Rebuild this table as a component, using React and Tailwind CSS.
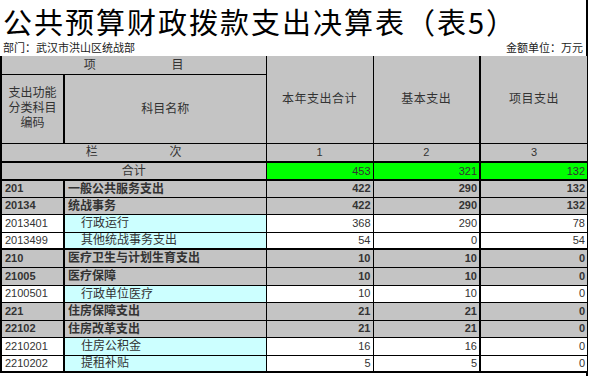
import React from 'react'

const ROWS = [
  { code: '201', name: '一般公共服务支出', a: 422, b: 290, c: 132, level: 1, h: 17 },
  { code: '20134', name: '统战事务', a: 422, b: 290, c: 132, level: 2, h: 17 },
  { code: '2013401', name: '行政运行', a: 368, b: 290, c: 78, level: 3, h: 18 },
  { code: '2013499', name: '其他统战事务支出', a: 54, b: 0, c: 54, level: 3, h: 17 },
  { code: '210', name: '医疗卫生与计划生育支出', a: 10, b: 10, c: 0, level: 1, h: 18, thick: true },
  { code: '21005', name: '医疗保障', a: 10, b: 10, c: 0, level: 2, h: 18 },
  { code: '2100501', name: '行政单位医疗', a: 10, b: 10, c: 0, level: 3, h: 17 },
  { code: '221', name: '住房保障支出', a: 21, b: 21, c: 0, level: 1, h: 18 },
  { code: '22102', name: '住房改革支出', a: 21, b: 21, c: 0, level: 2, h: 17 },
  { code: '2210201', name: '住房公积金', a: 16, b: 16, c: 0, level: 3, h: 18 },
  { code: '2210202', name: '提租补贴', a: 5, b: 5, c: 0, level: 3, h: 17 },
]

const gray = 'bg-[#c4c4c4]'

function DataRow({ row }) {
  const sub = row.level === 3
  const bg = sub ? 'bg-white' : gray
  const top = row.thick ? 'border-t-2' : 'border-t'
  const weight = sub ? 'font-normal' : 'font-bold'
  return (
    <tr style={{ height: row.h }}>
      <td className={`${bg} ${top} border-l-2 border-r-2 border-black px-[3px] text-[11px] ${weight} leading-none`}>
        {row.code}
      </td>
      <td
        className={`${sub ? 'bg-[#ccffff] pl-[16px]' : `${gray} pl-[3px]`} ${top} border-r border-black text-[12px] ${weight} leading-none`}
      >
        {row.name}
      </td>
      <td className={`${bg} ${top} border-r border-black text-right pr-[2px] text-[11px] ${weight} leading-none`}>{row.a}</td>
      <td className={`${bg} ${top} border-r-2 border-black text-right pr-[2px] text-[11px] ${weight} leading-none`}>{row.b}</td>
      <td className={`${bg} ${top} border-black text-right pr-[2px] text-[11px] ${weight} leading-none`}>{row.c}</td>
    </tr>
  )
}

export default function App() {
  return (
    <div className="w-[589px] h-[376px] bg-white overflow-hidden font-['Liberation_Sans','Noto_Sans_CJK_SC',sans-serif] text-black">
      <div className="w-[588px] h-full border-r-2 border-black">
        <div className="h-[42px] pl-[3px] text-[29px] leading-[42px] tracking-[2px] font-['Noto_Sans_CJK_SC',sans-serif]">
          公共预算财政拨款支出决算表（表5）
        </div>
        <div className="h-[14px] flex justify-between items-start px-[3px] text-[11px] leading-[13px] text-[#222]">
          <span>部门：武汉市洪山区统战部</span>
          <span>金额单位：万元</span>
        </div>
        <table className="table-fixed border-collapse w-[586px] text-[#333]">
          <colgroup>
            <col className="w-[63px]" />
            <col className="w-[202px]" />
            <col className="w-[107px]" />
            <col className="w-[107px]" />
            <col className="w-[107px]" />
          </colgroup>
          <tbody>
            <tr className="h-[18px]">
              <td colSpan={2} className={`${gray} border-l-2 border-r border-b border-black text-[12px] leading-none`}>
                <div className="flex justify-around px-[44px]">
                  <span>项</span>
                  <span>目</span>
                </div>
              </td>
              <td rowSpan={2} className={`${gray} border-r border-black text-center text-[12px] tracking-[0.5px]`}>本年支出合计</td>
              <td rowSpan={2} className={`${gray} border-r-2 border-black text-center text-[12px] tracking-[0.5px]`}>基本支出</td>
              <td rowSpan={2} className={`${gray} text-center text-[12px] tracking-[0.5px]`}>项目支出</td>
            </tr>
            <tr className="h-[69px]">
              <td className={`${gray} border-l-2 border-r-2 border-black text-center text-[12px] leading-[15px] px-[4px]`}>
                支出功能分类科目编码
              </td>
              <td className={`${gray} border-r border-black text-center text-[12px]`}>科目名称</td>
            </tr>
            <tr className="h-[19px]">
              <td colSpan={2} className={`${gray} border-l-2 border-r border-t border-black text-[12px] leading-none`}>
                <div className="flex justify-around px-[48px]">
                  <span>栏</span>
                  <span>次</span>
                </div>
              </td>
              <td className={`${gray} border-t border-r border-black text-center text-[11px] leading-none`}>1</td>
              <td className={`${gray} border-t border-r-2 border-black text-center text-[11px] leading-none`}>2</td>
              <td className={`${gray} border-t border-black text-center text-[11px] leading-none`}>3</td>
            </tr>
            <tr className="h-[18px]">
              <td colSpan={2} className={`${gray} border-l-2 border-r border-t-2 border-black text-center text-[12px] leading-none`}>
                合计
              </td>
              <td className="bg-[#00ff00] border-t-2 border-r border-black text-right pr-[2px] text-[11px] leading-none">453</td>
              <td className="bg-[#00ff00] border-t-2 border-r-2 border-black text-right pr-[2px] text-[11px] leading-none">321</td>
              <td className="bg-[#00ff00] border-t-2 border-black text-right pr-[2px] text-[11px] leading-none">132</td>
            </tr>
            {ROWS.map((row, i) => (
              <DataRow key={row.code} row={i === 0 ? { ...row, thick: true } : row} />
            ))}
            <tr className="h-[2px]">
              <td colSpan={5} className="border-t-2 border-black p-0" />
            </tr>
          </tbody>
        </table>
      </div>
    </div>
  )
}
